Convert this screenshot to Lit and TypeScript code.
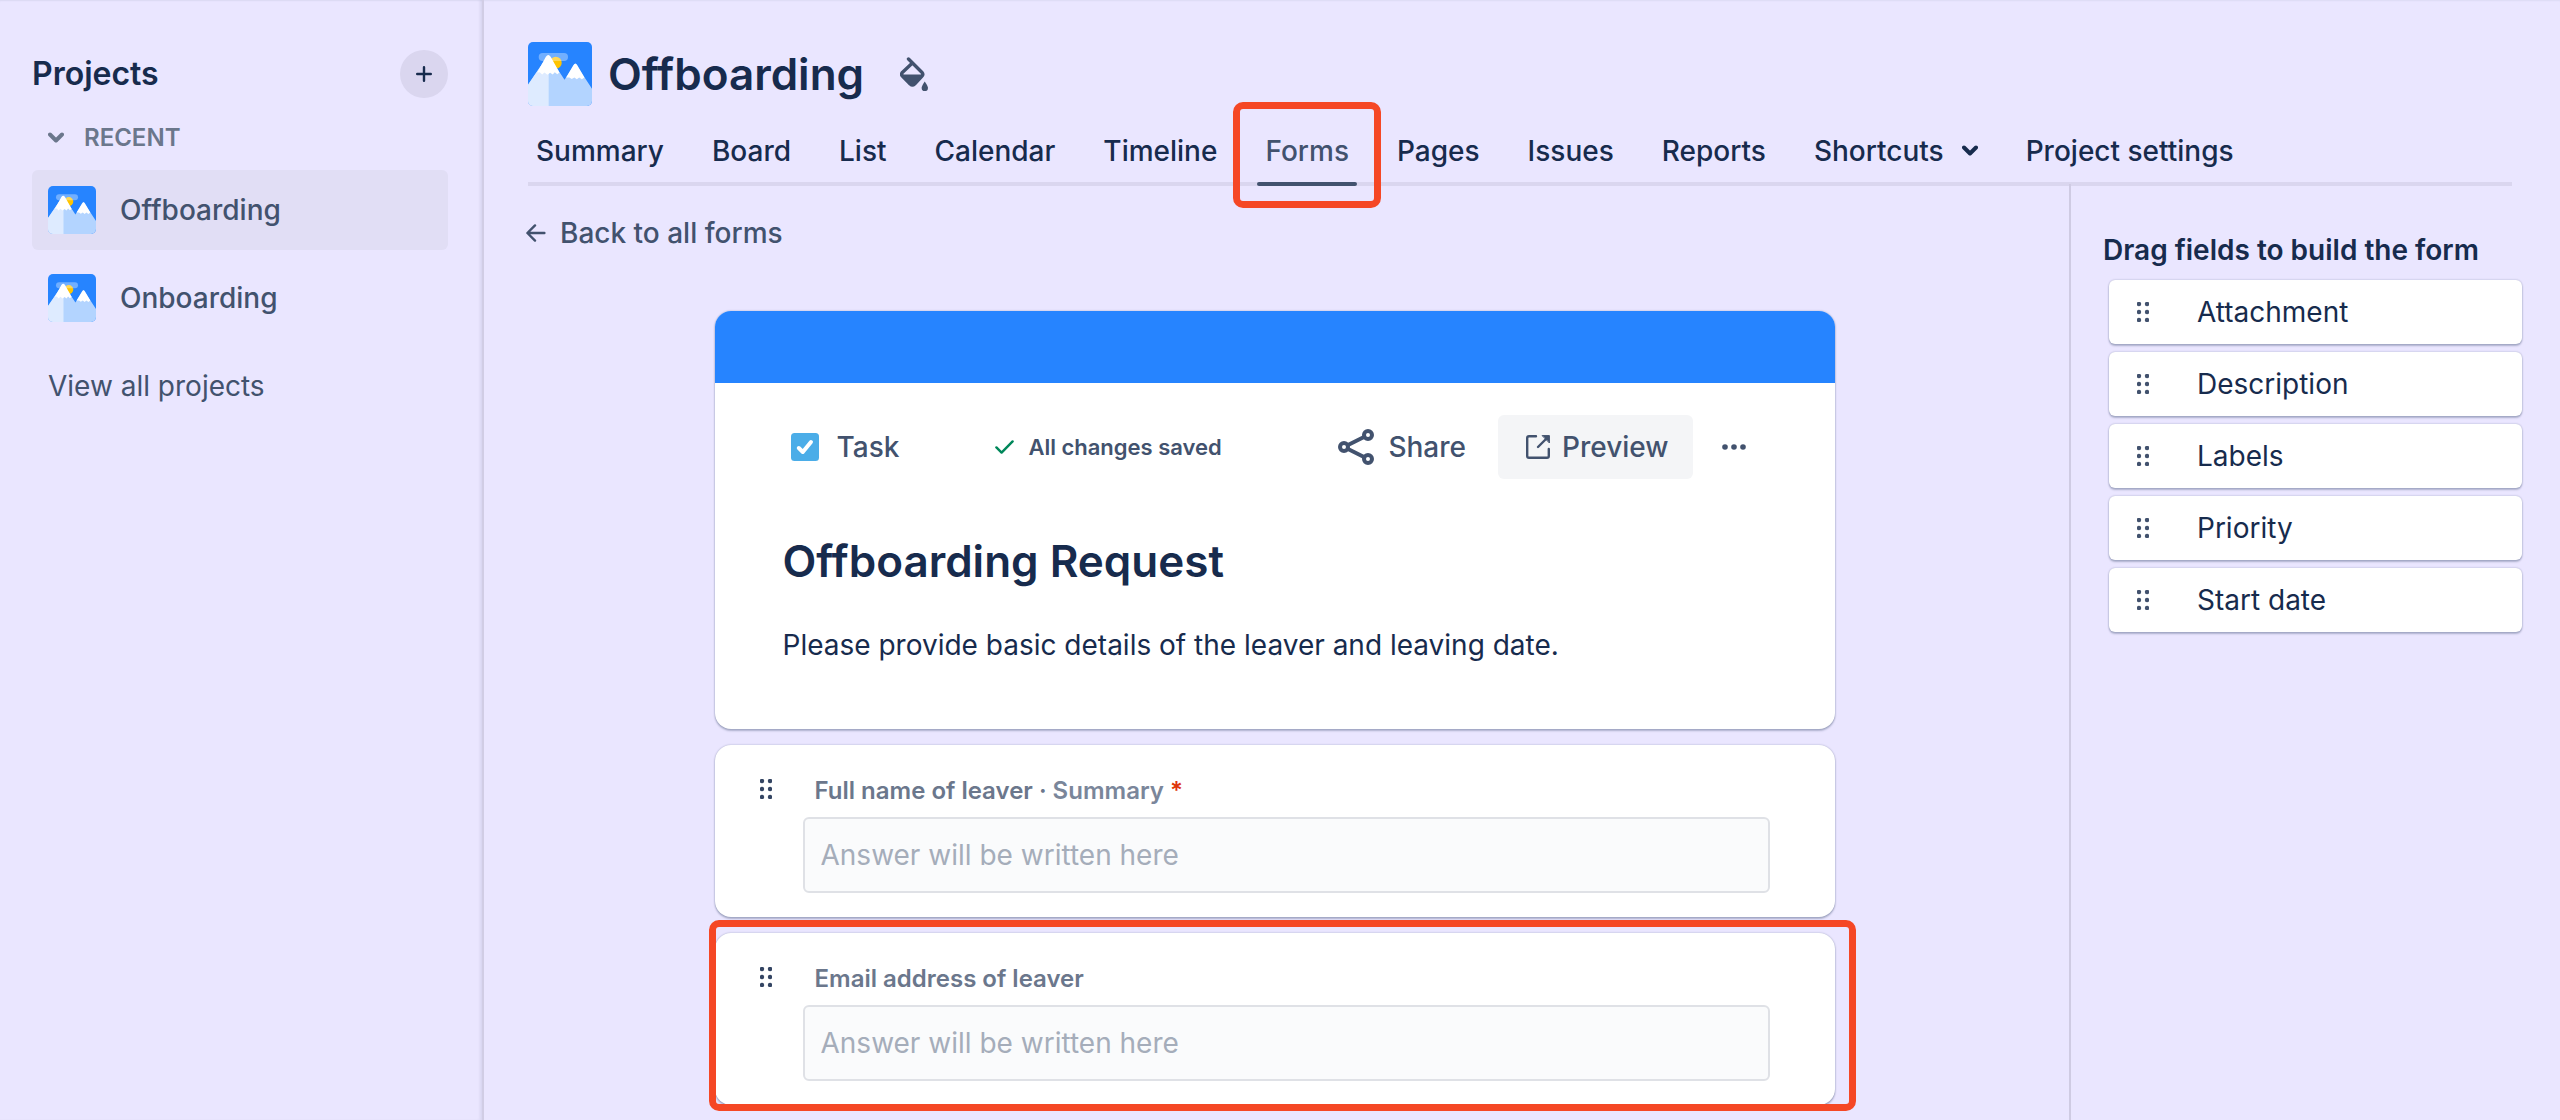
import { LitElement, html, css, svg } from "lit";
import { customElement, property } from "lit/decorators.js";
import { classMap } from "lit/directives/class-map.js";

const TABS = ["Summary", "Board", "List", "Calendar", "Timeline", "Forms", "Pages", "Issues", "Reports", "Shortcuts", "Project settings"];
const FIELDS = ["Attachment", "Description", "Labels", "Priority", "Start date"];

const gripIcon = html`<svg class="grip" width="12" height="20" viewBox="0 0 12 20" fill="currentColor" aria-hidden="true">
  ${[2, 10].map((x) => [2, 10, 18].map((y) => svg`<circle cx=${x} cy=${y} r="2.2" />`))}
</svg>`;

const chevronIcon = html`<svg width="16" height="12" viewBox="0 0 16 12" fill="none" stroke="currentColor" stroke-width="4" stroke-linecap="round" stroke-linejoin="round" aria-hidden="true">
  <path d="M2 2.5 8 8.5 14 2.5" />
</svg>`;

@customElement("project-avatar")
export class ProjectAvatar extends LitElement {
  static styles = css`
    :host { display: block; flex: none; width: 48px; height: 48px; border-radius: 5px; overflow: hidden; }
    :host([large]) { width: 64px; height: 64px; }
    .art { display: block; width: 100%; height: 100%; }
  `;
  @property({ type: Boolean, reflect: true }) large = false;

  render() {
    return html`<svg class="art" viewBox="0 0 48 48" aria-hidden="true">
      <rect width="48" height="48" fill="#2684ff" />
      <circle cx="20.8" cy="15.6" r="4.5" fill="#ffc400" />
      <rect x="8" y="8.2" width="22" height="6" rx="3" fill="#fff" fill-opacity=".35" />
      <path d="M0 32 14.2 11.2H16.2L27.4 28.4 35.5 16 48 35V48H0Z" fill="#b3d4ff" />
      <path d="M0 32 14.2 11.2H15.5V48H0Z" fill="#deebff" />
      <path d="M7 22.8 13.4 11Q15.2 8.4 17 11L23.6 22.8 22 24.2 20.1 22.6 18.5 24.4 16.6 23 14.6 24.6 12.4 22.8 10.6 24.4 8.8 22.6Z" fill="#fff" />
      <path d="M28.6 26.6 34 17.4Q35.5 15.2 37 17.4L42.3 26.6 40.4 28 38.4 26.6 36.6 28 34.8 26.6 32.8 27.8 31 26.6Z" fill="#fff" />
    </svg>`;
  }
}

@customElement("app-root")
export class AppRoot extends LitElement {
  static styles = css`
    :host {
      display: grid;
      grid-template-columns: 484px minmax(0, 1fr);
      height: 100vh;
      overflow: hidden;
      background: #eae6ff;
      color: #172b4d;
      font: 400 28px/40px Inter, "Noto Sans", sans-serif;
      box-shadow: inset 0 2px 2px -1px rgba(9, 30, 66, 0.06);
    }
    * { box-sizing: border-box; }
    h1, h2, p, ul { margin: 0; padding: 0; }
    ul { list-style: none; }
    a { color: inherit; text-decoration: none; }
    button { border: 0; padding: 0; background: none; color: inherit; font: inherit; cursor: pointer; }
    svg { display: block; flex: none; }

    .sidebar { padding: 50px 34px 0 32px; border-right: 2px solid #d1cde5; box-shadow: inset -3px 0 3px -1px rgba(9, 30, 66, 0.08); }
    .sidebar-head { display: flex; align-items: center; justify-content: space-between; }
    .sidebar-title { font-size: 32px; font-weight: 600; }
    .add { display: grid; place-items: center; width: 48px; height: 48px; border-radius: 50%; background: #dad6ef; }
    .recent { display: flex; align-items: center; gap: 20px; margin: 20px 0 12px 16px; color: #6b778c; font-size: 24px; font-weight: 600; }
    .projects { display: grid; gap: 8px; }
    .project { display: flex; align-items: center; gap: 24px; height: 80px; padding: 0 16px; border-radius: 6px; color: #42526e; font-weight: 500; }
    .project.current { background: #e1def5; }
    .view-all { display: block; margin: 28px 0 0 16px; color: #42526e; }

    .main { display: flex; flex-direction: column; min-width: 0; }
    .head { display: flex; align-items: center; padding: 42px 44px 0; }
    .title { margin: 0 36px 0 16px; font-size: 44px; line-height: 64px; font-weight: 600; }
    .paint { color: #42526e; }

    .tabs { display: flex; gap: 32px; margin: 0 48px 0 44px; border-bottom: 4px solid #dad6ef; font-weight: 500; white-space: nowrap; }
    .tab { position: relative; display: flex; align-items: center; gap: 18px; height: 76px; padding: 14px 8px 0; }
    .tab.current { color: #42526e; }
    .tab.current::before { content: ""; position: absolute; inset: auto 0 -4px; height: 4px; border-radius: 2px; background: #42526e; }
    .tab.current::after { content: ""; position: absolute; inset: -4px -24px -26px; border: 7px solid #f54725; border-radius: 10px; z-index: 1; }

    .body { display: grid; grid-template-columns: minmax(0, 1fr) 491px; flex: 1; min-height: 0; margin-top: -2px; }
    .builder { padding: 28px 46px 0 42px; }
    .back { display: inline-flex; align-items: center; gap: 14px; color: #42526e; font-weight: 500; }
    .form { display: grid; gap: 16px; max-width: 1120px; margin: 58px auto 0; }
    .card { position: relative; border-radius: 16px; background: #fff; box-shadow: 0 2px 2px rgba(9, 30, 66, 0.25), 0 0 2px rgba(9, 30, 66, 0.31); }
    .intro { height: 418px; overflow: hidden; }
    .banner { height: 72px; background: #2684ff; }
    .toolbar { display: flex; align-items: center; height: 64px; margin: 32px 88px 0 76px; color: #42526e; font-weight: 500; }
    .kind { display: flex; align-items: center; gap: 18px; }
    .saved { display: flex; align-items: center; gap: 14px; margin-left: 96px; font-size: 22px; font-weight: 600; }
    .share { display: flex; align-items: center; gap: 14px; margin-left: auto; }
    .preview { display: flex; align-items: center; gap: 12px; height: 64px; margin: 0 28px 0 32px; padding: 0 24px 0 28px; border-radius: 6px; background: #f4f5f7; }
    .form-title { margin: 50px 68px 0; font-size: 44px; line-height: 64px; font-weight: 600; }
    .form-text { margin: 32px 68px 0; }

    .question { padding: 26px 65px 24px 88px; height: 172px; }
    .question .grip { position: absolute; left: 45px; top: 34px; color: #344563; }
    .label { display: block; margin: 0 0 6px 12px; color: #6b778c; font-size: 24px; font-weight: 600; }
    .linked { color: #7a869a; }
    .required { color: #de350b; }
    .answer { display: block; width: 100%; height: 76px; padding: 0 16px; border: 2px solid #dfe1e6; border-radius: 6px; background: #fafbfc; color: #172b4d; font: inherit; }
    .answer::placeholder { color: #a5adba; opacity: 1; }
    .marked::after { content: ""; position: absolute; inset: -13px -21px -6px -6px; border: 7px solid #f54725; border-radius: 10px; pointer-events: none; }

    .palette { padding: 46px 38px 0 32px; border-left: 2px solid #cfcbe3; }
    .palette-title { font-size: 28px; line-height: 40px; font-weight: 600; white-space: nowrap; }
    .fields { display: grid; gap: 8px; margin: 10px 0 0 6px; }
    .field { display: flex; align-items: center; gap: 48px; width: 100%; height: 64px; padding: 0 28px; border-radius: 6px; background: #fff; box-shadow: 0 2px 2px rgba(9, 30, 66, 0.25), 0 0 2px rgba(9, 30, 66, 0.31); }
    .field .grip { color: #42526e; }
  `;

  private question(id: string, label: unknown, marked = false) {
    return html`<section class=${classMap({ card: true, question: true, marked })}>
      ${gripIcon}
      <label class="label" for=${id}>${label}</label>
      <input class="answer" id=${id} type="text" placeholder="Answer will be written here" />
    </section>`;
  }

  render() {
    return html`
      <aside class="sidebar">
        <div class="sidebar-head">
          <h2 class="sidebar-title">Projects</h2>
          <button class="add" aria-label="Create project">
            <svg width="16" height="16" viewBox="0 0 16 16" fill="none" stroke="currentColor" stroke-width="2.4" stroke-linecap="round"><path d="M8 1.2V14.8M1.2 8H14.8" /></svg>
          </button>
        </div>
        <button class="recent">${chevronIcon}RECENT</button>
        <nav>
          <ul class="projects">
            <li><a class="project current" href="#offboarding"><project-avatar></project-avatar>Offboarding</a></li>
            <li><a class="project" href="#onboarding"><project-avatar></project-avatar>Onboarding</a></li>
          </ul>
          <a class="view-all" href="#projects">View all projects</a>
        </nav>
      </aside>

      <main class="main">
        <header class="head">
          <project-avatar large></project-avatar>
          <h1 class="title">Offboarding</h1>
          <button class="paint" aria-label="Change background">
            <svg width="28" height="34" viewBox="0 0 28 34" fill="none">
              <path d="M8.5 2 21.8 15.2Q23.8 17.4 21.8 19.4L14.6 27Q12.4 29 10.2 27L2.6 19.4Q.6 17.4 2.6 15.2L12.4 6" stroke="currentColor" stroke-width="3.4" stroke-linecap="round" stroke-linejoin="round" />
              <path d="M2 17.6H22.8L13.6 27.4Q12.4 28.4 11.2 27.4Z" fill="currentColor" />
              <path d="M24.7 24.4Q28 29 28 31A3.2 3.2 0 0 1 21.6 31Q21.6 29 24.7 24.4Z" fill="currentColor" />
            </svg>
          </button>
        </header>
        <nav class="tabs">
          ${TABS.map((name) => html`<a class=${classMap({ tab: true, current: name === "Forms" })} href="#${name.toLowerCase().replace(" ", "-")}">${name}${name === "Shortcuts" ? chevronIcon : ""}</a>`)}
        </nav>

        <div class="body">
          <section class="builder">
            <a class="back" href="#forms">
              <svg width="20" height="18" viewBox="0 0 20 18" fill="none" stroke="currentColor" stroke-width="2.4" stroke-linecap="round" stroke-linejoin="round" aria-hidden="true"><path d="M9 1.4 1.4 9 9 16.6M1.8 9H18.4" /></svg>
              Back to all forms
            </a>
            <form class="form">
              <section class="card intro">
                <div class="banner"></div>
                <div class="toolbar">
                  <span class="kind">
                    <svg width="28" height="28" viewBox="0 0 28 28" aria-hidden="true"><rect width="28" height="28" rx="3.5" fill="#4bade8" /><path d="M7.8 15 11.8 19 20 9" fill="none" stroke="#fff" stroke-width="4" stroke-linecap="round" stroke-linejoin="round" /></svg>
                    Task
                  </span>
                  <span class="saved">
                    <svg width="19" height="14" viewBox="0 0 19 14" fill="none" stroke="#00875a" stroke-width="2.4" stroke-linecap="round" stroke-linejoin="round" aria-hidden="true"><path d="M1.4 7.4 6.6 12.6 17.6 1.4" /></svg>
                    All changes saved
                  </span>
                  <button class="share" type="button">
                    <svg width="36" height="36" viewBox="0 0 36 36" fill="none" stroke="currentColor" stroke-width="4" aria-hidden="true"><circle cx="6" cy="18" r="4" /><circle cx="30" cy="6" r="4" /><circle cx="30" cy="30" r="4" /><path d="M9.5 16.2 26.5 7.8M9.5 19.8 26.5 28.2" /></svg>
                    Share
                  </button>
                  <button class="preview" type="button">
                    <svg width="24" height="24" viewBox="0 0 24 24" fill="none" stroke="currentColor" stroke-width="2.4" stroke-linecap="round" stroke-linejoin="round" aria-hidden="true"><path d="M10 1.2H3Q1.2 1.2 1.2 3V21Q1.2 22.8 3 22.8H21Q22.8 22.8 22.8 21V14M20 4 12 12" /><path d="M16.5 .6H23.4V7.6Z" fill="currentColor" stroke-width="1" /></svg>
                    Preview
                  </button>
                  <button type="button" aria-label="More actions">
                    <svg width="26" height="8" viewBox="0 0 26 8" fill="currentColor"><circle cx="4" cy="4" r="2.8" /><circle cx="13" cy="4" r="2.8" /><circle cx="22" cy="4" r="2.8" /></svg>
                  </button>
                </div>
                <h2 class="form-title">Offboarding Request</h2>
                <p class="form-text">Please provide basic details of the leaver and leaving date.</p>
              </section>
              ${this.question("full-name", html`Full name of leaver · <span class="linked">Summary</span> <span class="required">*</span>`)}
              ${this.question("email", "Email address of leaver", true)}
            </form>
          </section>
          <aside class="palette">
            <h2 class="palette-title">Drag fields to build the form</h2>
            <ul class="fields">
              ${FIELDS.map((name) => html`<li><button class="field">${gripIcon}${name}</button></li>`)}
            </ul>
          </aside>
        </div>
      </main>
    `;
  }
}
